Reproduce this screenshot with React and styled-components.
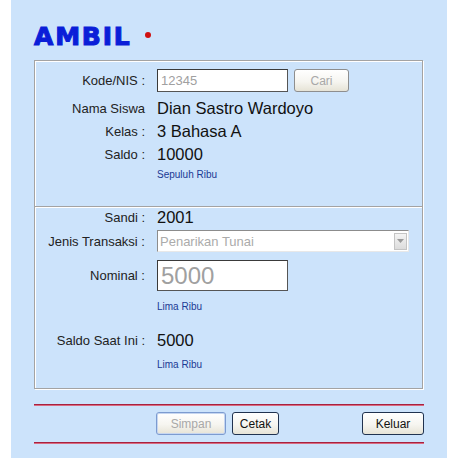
import React from 'react';
import styled, { createGlobalStyle } from 'styled-components';

const Global = createGlobalStyle`
  html, body {
    margin: 0;
    padding: 0;
    background: #ffffff;
  }
  body {
    font-family: "Liberation Sans", Arial, sans-serif;
  }
`;

const Page = styled.div`
  margin-left: 11px;
  width: 436px;
  height: 458px;
  background: #cce3fb;
  padding: 0 23px;
  box-sizing: border-box;
  overflow: hidden;
`;

const Header = styled.div`
  height: 60px;
  display: flex;
  align-items: center;
  padding-top: 13px;
  box-sizing: border-box;
`;

const Title = styled.h1`
  margin: 0;
  font-family: "DejaVu Sans", sans-serif;
  font-weight: bold;
  font-size: 25px;
  letter-spacing: 1.8px;
  color: #0b1ed8;
  -webkit-text-stroke: 1.1px #0b1ed8;
  line-height: 1;
`;

const Dot = styled.span`
  width: 6px;
  height: 6px;
  border-radius: 50%;
  background: #d01010;
  margin-left: 13px;
  margin-top: -4px;
`;

const Panel = styled.div`
  width: 389px;
  border: 1px solid #a3a3a3;
  box-shadow: inset 1px 1px 0 #ffffff, 1px 1px 0 #ffffff;
  box-sizing: border-box;
`;

const Section = styled.div`
  height: ${p => p.$h}px;
  padding-top: ${p => p.$pt}px;
  box-sizing: border-box;
  display: flex;
  flex-direction: column;
  & + & {
    border-top: 1px solid #a3a3a3;
    box-shadow: inset 0 1px 0 #ffffff;
  }
`;

const Row = styled.div`
  display: grid;
  grid-template-columns: 110px 1fr;
  column-gap: 12px;
  align-items: center;
  height: ${p => p.$h}px;
  margin-top: ${p => p.$mt || 0}px;
  flex-shrink: 0;
`;

const Label = styled.div`
  text-align: right;
  font-size: 13px;
  color: #222;
  white-space: nowrap;
`;

const Value = styled.div`
  font-size: 16.5px;
  color: #111;
  white-space: nowrap;
`;

const Note = styled.div`
  font-size: 10px;
  color: #1b3a94;
  white-space: nowrap;
`;

const Inline = styled.div`
  display: flex;
  align-items: center;
  gap: 6px;
`;

const TextBox = styled.div`
  width: ${p => p.$w}px;
  height: ${p => p.$h}px;
  box-sizing: border-box;
  background: #ffffff;
  border: 1px solid #3a3a3a;
  border-right-color: #555;
  border-bottom-color: #555;
  color: #a0a0a0;
  font-size: ${p => p.$fs}px;
  display: flex;
  align-items: center;
  padding-left: 3px;
  line-height: 1;
`;

const Button = styled.button`
  height: 23px;
  width: ${p => p.$w}px;
  padding: 0;
  border: 1px solid ${p => (p.$focus ? '#7c9bd0' : p.$disabled ? '#8e8e8e' : '#20324f')};
  border-radius: 3px;
  background: linear-gradient(#ffffff 0%, #f6f5f0 55%, #e6e3d6 100%);
  box-shadow: ${p => (p.$focus ? 'inset 0 0 0 1px #c6d6f0' : 'none')};
  font-family: "Liberation Sans", Arial, sans-serif;
  font-size: 12px;
  color: ${p => (p.$disabled ? '#a8a8a8' : '#111')};
  cursor: default;
  margin-left: ${p => (p.$push ? 'auto' : '0')};
`;

const Select = styled.div`
  width: 252px;
  height: 22px;
  box-sizing: border-box;
  background: #ffffff;
  border: 1px solid #8c8c8c;
  border-right-color: #e8e8e8;
  border-bottom-color: #e8e8e8;
  display: flex;
  align-items: center;
  justify-content: space-between;
  padding-left: 2px;
  padding-right: 1px;
  color: #ababab;
  font-size: 13px;
`;

const DropBtn = styled.div`
  width: 13px;
  height: 17px;
  box-sizing: border-box;
  border: 1px solid #c4c4c4;
  background: linear-gradient(#f4f4f4, #dcdcdc);
  display: flex;
  align-items: center;
  justify-content: center;
`;

const RedLine = styled.div`
  width: 390px;
  height: 2px;
  background: linear-gradient(#a8213f 50%, #d96a80 50%);
  margin-top: ${p => p.$mt}px;
`;

const Actions = styled.div`
  width: 390px;
  display: flex;
  gap: 6px;
  padding-left: 122px;
  box-sizing: border-box;
  margin-top: 6px;
`;

export default function App() {
  return (
    <>
      <Global />
      <Page>
        <Header>
          <Title>AMBIL</Title>
          <Dot />
        </Header>
        <Panel>
          <Section $h={145} $pt={8}>
            <Row $h={23}>
              <Label>Kode/NIS :</Label>
              <Inline>
                <TextBox $w={131} $h={23} $fs={13}>12345</TextBox>
                <Button $w={55} $disabled>Cari</Button>
              </Inline>
            </Row>
            <Row $h={22} $mt={5}>
              <Label>Nama Siswa</Label>
              <Value>Dian Sastro Wardoyo</Value>
            </Row>
            <Row $h={22} $mt={1}>
              <Label>Kelas :</Label>
              <Value>3 Bahasa A</Value>
            </Row>
            <Row $h={22} $mt={1}>
              <Label>Saldo :</Label>
              <Value>10000</Value>
            </Row>
            <Row $h={14} $mt={2}>
              <span />
              <Note>Sepuluh Ribu</Note>
            </Row>
          </Section>
          <Section $h={182} $pt={1}>
            <Row $h={19}>
              <Label>Sandi :</Label>
              <Value>2001</Value>
            </Row>
            <Row $h={22} $mt={3}>
              <Label>Jenis Transaksi :</Label>
              <Select>
                <span>Penarikan Tunai</span>
                <DropBtn>
                  <svg width="7" height="4" viewBox="0 0 7 4">
                    <path d="M0 0 L7 0 L3.5 4 Z" fill="#9a9a9a" />
                  </svg>
                </DropBtn>
              </Select>
            </Row>
            <Row $h={31} $mt={8}>
              <Label>Nominal :</Label>
              <TextBox $w={131} $h={31} $fs={24}>5000</TextBox>
            </Row>
            <Row $h={14} $mt={8}>
              <span />
              <Note>Lima Ribu</Note>
            </Row>
            <Row $h={22} $mt={16}>
              <Label>Saldo Saat Ini :</Label>
              <Value>5000</Value>
            </Row>
            <Row $h={14} $mt={6}>
              <span />
              <Note>Lima Ribu</Note>
            </Row>
          </Section>
        </Panel>
        <RedLine $mt={15} />
        <Actions>
          <Button $w={70} $disabled $focus>Simpan</Button>
          <Button $w={47}>Cetak</Button>
          <Button $w={62} $push>Keluar</Button>
        </Actions>
        <RedLine $mt={7} />
      </Page>
    </>
  );
}
